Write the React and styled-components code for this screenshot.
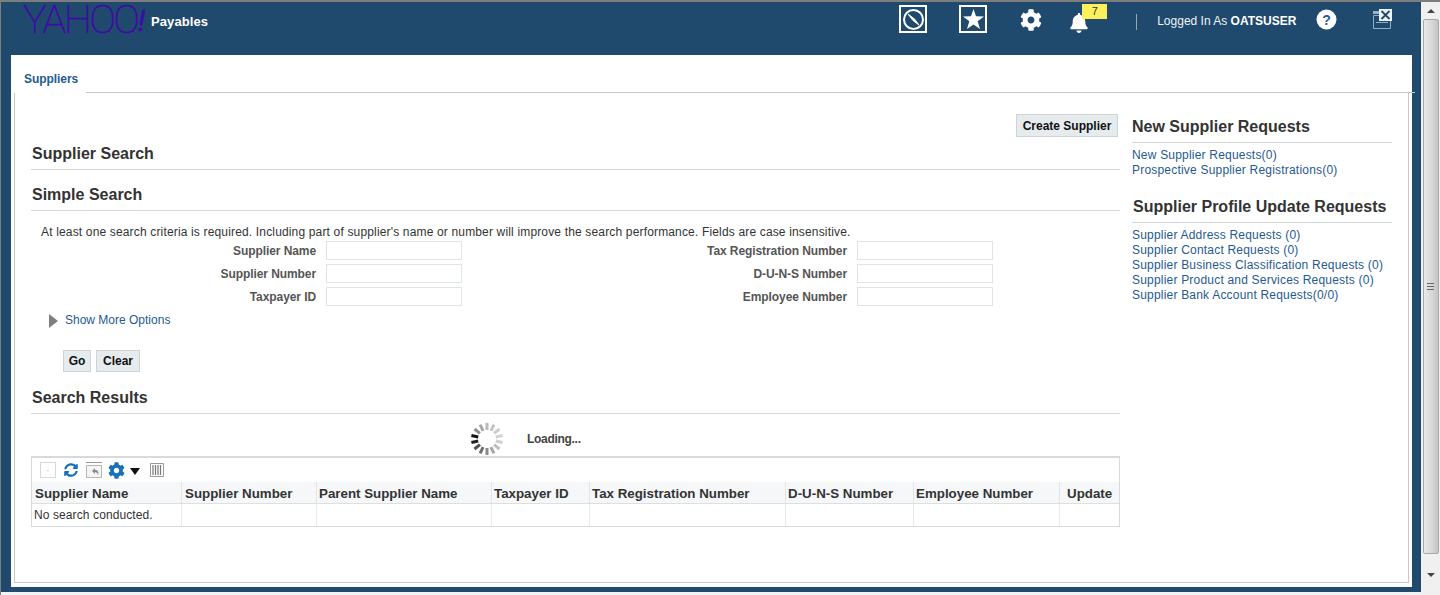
import React from "react";
import styled, { createGlobalStyle } from "styled-components";
import { FaCog, FaBell, FaSyncAlt } from "react-icons/fa";

const Global = createGlobalStyle`
  html, body { margin: 0; padding: 0; overflow: hidden; background: #f4f4f4; }
  * { box-sizing: border-box; }
  body { font-family: "Liberation Sans", Arial, sans-serif; font-size: 12px; color: #222; }
`;

const Window = styled.div`
  width: 1440px; height: 595px; display: flex;
  border-top: 2px solid #7d7d7d; border-left: 1px solid #7d7d7d; background: #f3f3f3;
`;
const Main = styled.div`
  width: 1420px; height: 590px; background: #1f4a6e; display: flex; flex-direction: column;
`;
const Header = styled.header`
  height: 53px; display: flex; align-items: flex-start; padding-left: 22px; flex: none;
`;
const LogoMark = styled.svg`
  flex: none; display: block; width: 128px; height: 36px; margin-top: 1px; overflow: visible;
`;
const AppName = styled.div`
  color: #fff; font-weight: bold; font-size: 13px; line-height: 15px; margin-top: 12px; letter-spacing: .1px;
`;
const Tool = styled.div`
  position: relative; flex: none; margin-left: ${p => p.$gap}px; margin-top: ${p => p.$top}px;
  width: ${p => p.$w}px; height: ${p => p.$h}px; display: flex; align-items: center; justify-content: center;
  color: #fff;
`;
const BoxIcon = styled(Tool)`
  border: 2px solid #fff;
`;
const Badge = styled.span`
  position: absolute; left: 13px; top: 0; width: 25px; height: 15px; background: #fdf15b; color: #333;
  font-size: 11px; line-height: 14px; text-align: center;
`;
const BellGlyph = styled.span`
  display: flex; margin-top: 8px; margin-right: 1px;
`;
const Sep = styled.div`
  flex: none; width: 1px; height: 16px; background: #8fa8bc; margin-left: 47px; margin-top: 12px;
`;
const User = styled.div`
  flex: none; margin-left: 20px; margin-top: 12px; color: #eef3f7; font-size: 12px; line-height: 15px; white-space: nowrap;
  b { color: #fff; }
`;
const Panel = styled.div`
  margin: 0 9px 5px 10px; background: #fff; flex: 1; display: flex; flex-direction: column; min-height: 0;
`;
const TabBar = styled.div`
  height: 38px; display: flex; align-items: flex-end; flex: none;
`;
const Tab = styled.div`
  margin-left: 3px; width: 72px; height: 38px; padding: 17px 0 0 10px; color: #1f5a94; font-weight: bold; font-size: 12px; line-height: 15px; letter-spacing: -.05px;
`;
const TabLine = styled.div`
  flex: 1; height: 1px; background: #c6c6c6; margin-right: -3px; position: relative; z-index: 1;
`;
const Body = styled.div`
  flex: 1; margin: 0 3px 4px 3px; border: 1px solid #c8c8c8; border-top: 0; display: flex; gap: 12px;
  padding-left: 16px;
`;
const Left = styled.div`
  width: 1089px; flex: none; display: flex; flex-direction: column;
`;
const Right = styled.div`
  width: 260px; flex: none; padding-top: 24px;
`;
const Btn = styled.button`
  font: bold 12px "Liberation Sans", Arial, sans-serif; color: #111; height: ${p => p.$h || 22}px; padding: 0;
  width: ${p => p.$w}px; background: #e6ebee; border: 1px solid #cdd3d7; border-radius: 0; flex: none;
`;
const TopRow = styled.div`
  display: flex; justify-content: flex-end; padding: 21px 2px 0 0;
`;
const Heading = styled.h2`
  margin: ${p => p.$mt}px 0 0; padding: 0 0 6px 1px; font-size: 16px; line-height: 19px; font-weight: bold; color: #333;
  border-bottom: 1px solid #d3d7da;
`;
const Hint = styled.p`
  margin: 14px 0 0 10px; font-size: 12px; line-height: 15px; color: #333; letter-spacing: .16px;
`;
const Form = styled.div`
  display: grid; grid-template-columns: 285px 136px 375px 136px; column-gap: 10px; row-gap: 4px; margin-top: 1px;
`;
const Label = styled.label`
  font-weight: bold; font-size: 12px; color: #555; text-align: right; line-height: 18px; height: 19px; white-space: nowrap;
  padding-top: 1px; letter-spacing: -.08px;
`;
const Field = styled.div`
  height: 19px; border: 1px solid #dfe4e8; background: #fff;
`;
const More = styled.div`
  display: flex; align-items: center; gap: 7px; margin: 7px 0 0 18px; height: 15px; color: #1f5a94; line-height: 15px;
`;
const Tri = styled.span`
  width: 0; height: 0; border-left: 9px solid #7f7f7f; border-top: 7px solid transparent; border-bottom: 7px solid transparent;
`;
const Buttons = styled.div`
  display: flex; gap: 5px; margin: 22px 0 0 32px;
`;
const Loading = styled.div`
  display: flex; align-items: center; height: 33px; margin: 8px 0 0 439px;
  font-weight: bold; color: #444; gap: 23px; letter-spacing: -.3px;
`;
const TableWrap = styled.div`
  margin-top: 1px; width: 1089px; border: 2px solid #d5dade; border-left-width: 1px; border-bottom-width: 1px; border-right-width: 1px;
`;
const Toolbar = styled.div`
  height: 24px; display: flex; align-items: center; padding-left: 8px;
`;
const TIcon = styled.span`
  display: flex; align-items: center; justify-content: center; flex: none; width: ${p => p.$w}px; height: 16px;
  margin-left: ${p => p.$gap || 0}px; color: #1a70b8;
`;
const Check = styled(TIcon)`
  border: 1px solid #d8d8d8; color: #bbb; font-size: 10px; height: 16px;
`;
const Row = styled.div`
  display: grid; grid-template-columns: 149px 135px 175px 98px 196px 128px 146px 1fr;
  height: ${p => p.$h}px; background: ${p => p.$head ? "#f5f7f8" : "#fff"};
  border-bottom: ${p => p.$head ? "1px solid #dbe0e3" : "0"};
`;
const HeadCell = styled.div`
  font-size: 13.33px; font-weight: bold; color: #333; padding: 2px 0 0 2px; line-height: 19px; height: 21px; white-space: nowrap;
  & + & { border-left: 1px solid #e2e6e9; }
  &:nth-child(-n+2) { padding-left: 3px; }
  &:last-child { padding-left: 7px; }
`;
const Cell = styled.div`
  font-size: 12px; color: #333; padding: 1px 0 0 2px; line-height: 21px; white-space: nowrap; letter-spacing: .1px;
  & + & { border-left: 1px solid #e8ebed; }
`;
const SideHead = styled.h2`
  margin: ${p => p.$mt || 0}px 0 5px; padding: 0 0 6px ${p => p.$pl || 0}px; font-size: 16px; line-height: 19px; color: #333;
  font-weight: bold; border-bottom: 1px solid #d3d7da; white-space: nowrap;
`;
const SideLink = styled.a`
  display: block; font-size: 12px; line-height: 15px; color: #1f5a94; white-space: nowrap; letter-spacing: .2px;
`;
const Scrollbar = styled.div`
  flex: 1; position: relative; background: #f0f0f0; height: 593px; display: flex; flex-direction: column; align-items: center;
`;
const Arrow = styled.span`
  width: 0; height: 0; margin-top: ${p => p.$top}px;
  border-left: 4px solid transparent; border-right: 4px solid transparent;
  ${p => p.$up ? "border-bottom: 4px solid #444;" : "border-top: 4px solid #444;"}
`;
const Thumb = styled.div`
  width: 16px; height: 535px; margin-top: 6px; background: linear-gradient(90deg, #e9e9e9, #d6d6d6 60%, #c4c4c4);
  border: 1px solid #a8a8a8; border-radius: 2px; display: flex; align-items: center; justify-content: center;
`;
const Grip = styled.span`
  width: 7px; height: 8px; background: repeating-linear-gradient(#666 0 1px, transparent 1px 3px);
`;
const DownTri = styled.span`
  width: 0; height: 0; border-left: 5px solid transparent; border-right: 5px solid transparent; border-top: 7px solid #111; margin-top: 3px;
`;

const Logo = () => (
  <LogoMark viewBox="0 0 128 36" role="img" aria-label="Yahoo">
    <text x="0" y="30" fontFamily="Roboto, sans-serif" fontWeight="100" fontSize="39.5" letterSpacing="-2.2" fill="#3f0aa6" stroke="#3f0aa6" strokeWidth="0.6">
      YAHOO<tspan fontSize="30" fontStyle="italic" fontWeight="400" letterSpacing="0" dy="-2">!</tspan>
    </text>
  </LogoMark>
);
const Compass = () => (
  <svg width="23" height="23" viewBox="0 0 23 23" fill="none" stroke="#fff">
    <circle cx="11.5" cy="11.5" r="9.5" strokeWidth="2" />
    <path d="M6 6 L11 12.5 L17 17 L12.5 11 Z" fill="#fff" strokeWidth="1" strokeLinejoin="round" />
  </svg>
);
const Star = () => (
  <svg width="21" height="20" viewBox="0 0 21 20">
    <path d="M10.5 0 L13 7.2 L21 7.6 L14.7 12.3 L17 20 L10.5 15.5 L4 20 L6.3 12.3 L0 7.6 L8 7.2 Z" fill="#fff" />
  </svg>
);
const Help = () => (
  <svg width="21" height="21" viewBox="0 0 21 21">
    <circle cx="10.5" cy="10.5" r="10" fill="#fff" />
    <text x="10.5" y="15.5" textAnchor="middle" fontFamily="Liberation Sans" fontWeight="bold" fontSize="14" fill="#1f5f9c">?</text>
  </svg>
);
const Logout = () => (
  <svg width="20" height="20" viewBox="0 0 20 20" fill="none">
    <path d="M0.5 6.5 H17.5 V19.5 H0.5 Z M3 13.5 H15" stroke="#8fb0c9" />
    <path d="M0 2 H7 V5 H0 Z" fill="#9ab2c4" />
    <path d="M6 0 H19 V12 H6 Z" fill="#eef4f9" />
    <path d="M8.5 2 L16.5 10 M16.5 2 L8.5 10" stroke="#1f4a6e" strokeWidth="1.8" />
  </svg>
);
const Spinner = () => (
  <svg width="34" height="34" viewBox="-17 -17 34 34" strokeWidth="3">
    {["#b9b9b9","#c4c4c4","#cdcdcd","#d2d2d2","#cfcfcf","#bdbdbd","#a5a5a5","#8a8a8a","#6f6f6f","#4f4f4f","#222","#111","#8f8f8f","#a8a8a8"].map((c, i) => {
      const a = (i * 360) / 14 - 90;
      return <line key={i} x1="9" x2="16" y1="0" y2="0" stroke={c} transform={`rotate(${a})`} />;
    })}
  </svg>
);
const Detach = () => (
  <svg width="16" height="16" viewBox="0 0 16 16" fill="none">
    <path d="M0.5 3.5 H15.5 V15.5 H0.5 Z" stroke="#b5b5b5" fill="#f5f5f5" />
    <path d="M0 0.5 H16" stroke="#999" />
    <path d="M6 9 L9 6 V8 C12 8 13 10 12 13 C11.5 11 10.5 10 9 10 V12 Z" fill="#8a8a8a" />
  </svg>
);
const Columns = () => (
  <svg width="14" height="14" viewBox="0 0 14 14" fill="none">
    <path d="M0.5 0.5 H13.5 V13.5 H0.5 Z" stroke="#999" />
    <path d="M3 2 V12 M5.5 2 V12 M8 2 V12 M10.5 2 V12" stroke="#777" strokeWidth="1.2" />
  </svg>
);

const columns = ["Supplier Name","Supplier Number","Parent Supplier Name","Taxpayer ID","Tax Registration Number","D-U-N-S Number","Employee Number","Update"];
const fields = [["Supplier Name","Tax Registration Number"],["Supplier Number","D-U-N-S Number"],["Taxpayer ID","Employee Number"]];

export default function App() {
  return (
    <>
      <Global />
      <Window>
        <Main>
          <Header>
            <Logo />
            <AppName>Payables</AppName>
            <BoxIcon $gap={691} $top={3} $w={28} $h={28}><Compass /></BoxIcon>
            <BoxIcon $gap={32} $top={3} $w={28} $h={28}><Star /></BoxIcon>
            <Tool $gap={33} $top={7} $w={22} $h={22}><FaCog size={22} /></Tool>
            <Tool $gap={27} $top={2} $w={20} $h={30}>
              <BellGlyph><FaBell size={20} /></BellGlyph>
              <Badge>7</Badge>
            </Tool>
            <Sep />
            <User>Logged In As <b>OATSUSER</b></User>
            <Tool $gap={20} $top={7} $w={21} $h={21}><Help /></Tool>
            <Tool $gap={36} $top={7} $w={20} $h={20}><Logout /></Tool>
          </Header>
          <Panel>
            <TabBar>
              <Tab>Suppliers</Tab>
              <TabLine />
            </TabBar>
            <Body>
              <Left>
                <TopRow><Btn $w={102} $h={23}>Create Supplier</Btn></TopRow>
                <Heading $mt={7}>Supplier Search</Heading>
                <Heading $mt={15}>Simple Search</Heading>
                <Hint>At least one search criteria is required. Including part of supplier's name or number will improve the search performance. Fields are case insensitive.</Hint>
                <Form>
                  {fields.map(([a, b]) => (
                    <React.Fragment key={a}>
                      <Label>{a}</Label><Field />
                      <Label>{b}</Label><Field />
                    </React.Fragment>
                  ))}
                </Form>
                <More><Tri />Show More Options</More>
                <Buttons><Btn $w={28}>Go</Btn><Btn $w={44}>Clear</Btn></Buttons>
                <Heading $mt={16}>Search Results</Heading>
                <Loading><Spinner />Loading...</Loading>
                <TableWrap>
                  <Toolbar>
                    <Check $w={16}>·</Check>
                    <TIcon $w={14} $gap={8}><FaSyncAlt size={14} /></TIcon>
                    <TIcon $w={16} $gap={8}><Detach /></TIcon>
                    <TIcon $w={17} $gap={6}><FaCog size={17} /></TIcon>
                    <TIcon $w={10} $gap={5}><DownTri /></TIcon>
                    <TIcon $w={14} $gap={10}><Columns /></TIcon>
                  </Toolbar>
                  <Row $head $h={22}>
                    {columns.map(c => <HeadCell key={c}>{c}</HeadCell>)}
                  </Row>
                  <Row $h={22}>
                    <Cell>No search conducted.</Cell>
                    {columns.slice(1).map(c => <Cell key={c} />)}
                  </Row>
                </TableWrap>
              </Left>
              <Right>
                <SideHead>New Supplier Requests</SideHead>
                <SideLink>New Supplier Requests(0)</SideLink>
                <SideLink>Prospective Supplier Registrations(0)</SideLink>
                <SideHead $mt={19} $pl={1}>Supplier Profile Update Requests</SideHead>
                <SideLink>Supplier Address Requests (0)</SideLink>
                <SideLink>Supplier Contact Requests (0)</SideLink>
                <SideLink>Supplier Business Classification Requests (0)</SideLink>
                <SideLink>Supplier Product and Services Requests (0)</SideLink>
                <SideLink>Supplier Bank Account Requests(0/0)</SideLink>
              </Right>
            </Body>
          </Panel>
        </Main>
        <Scrollbar>
          <Arrow $up $top={7} />
          <Thumb><Grip /></Thumb>
          <Arrow $top={19} />
        </Scrollbar>
      </Window>
    </>
  );
}
